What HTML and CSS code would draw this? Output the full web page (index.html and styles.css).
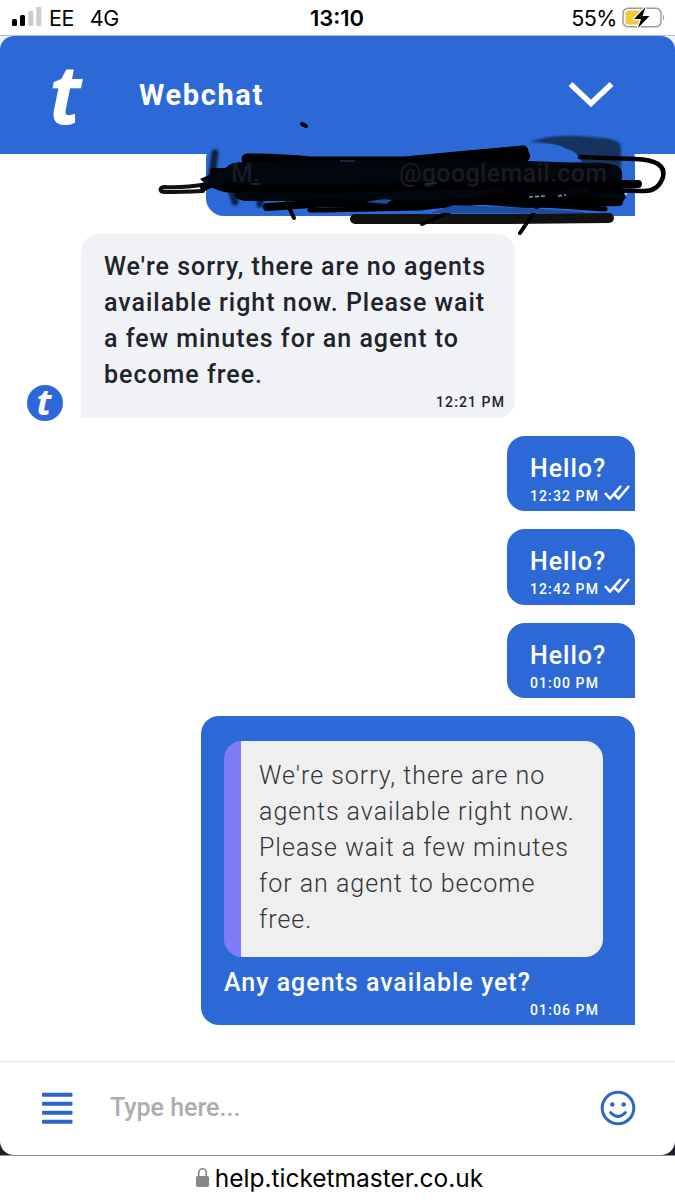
FILE: index.html
```html
<!DOCTYPE html>
<html lang="en">

<head>
    <meta charset="UTF-8">
    <meta name="viewport" content="width=device-width, initial-scale=1.0">
    <title>Webchat</title>
    <link rel="stylesheet" href="styles.css">
</head>

<body>

    <div class="phone">
        <!-- Status bar -->
        <div class="status-bar">
            <div class="status-left">
                <svg class="signal" width="30" height="20" viewBox="0 0 30 20">
                    <rect x="0" y="12" width="5" height="7" rx="1.5" fill="#000"/>
                    <rect x="8" y="8" width="5" height="11" rx="1.5" fill="#000"/>
                    <rect x="16.3" y="4" width="5" height="15" rx="1" fill="#ccc"/>
                    <rect x="24.3" y="0" width="5" height="19" rx="1" fill="#ccc"/>
                </svg>
                <span class="carrier">EE</span>
                <span class="network">4G</span>
            </div>
            <div class="clock">13:10</div>
            <div class="status-right">
                <span class="percent">55%</span>
                <svg class="battery" width="44" height="22" viewBox="0 0 44 22">
                    <rect x="1" y="1.2" width="38" height="18.6" rx="5" fill="#fff" stroke="#9b9b9b" stroke-width="1.5"/>
                    <path d="M6 3.5h13.5v14H6A2.5 2.5 0 0 1 3.5 15V6A2.5 2.5 0 0 1 6 3.5z" fill="#f5c73c"/>
                    <path d="M41 7.5q2.5 3 0 6z" fill="#9b9b9b"/>
                    <path d="M23.5 0 12 12h7l-3 9 11.5-12h-7z" fill="#000" stroke="#fff" stroke-width="2.4" paint-order="stroke"/>
                </svg>
            </div>
        </div>

        <!-- Header -->
        <div class="header-wrap">
            <div class="header">
                <span class="logo">t</span>
                <h1>Webchat</h1>
                <svg class="chevron" width="46" height="28" viewBox="0 0 46 28">
                    <path d="M2.5 3 23 22.5 43.5 3" fill="none" stroke="#fff" stroke-width="5.6"/>
                </svg>
            </div>
        </div>

        <!-- Messages -->
        <div class="chat">
            <div class="message sent email">
                <div class="meta">
                    <svg class="ticks" width="27" height="15" viewBox="0 0 27 15"><path d="M1 8l5 5.5L17 1M9.5 8.5l5 5L25 1" fill="none" stroke="#a9c6f4" stroke-width="2.6"/></svg>
                </div>
            </div>

            <div class="row">
                <span class="avatar">t</span>
                <div class="message received">
                    <p class="text">We're sorry, there are no agents<br>available right now. Please wait<br>a few minutes for an agent to<br>become free.</p>
                    <div class="meta"><span class="time">12:21 PM</span></div>
                </div>
            </div>

            <div class="message sent">
                <p class="text">Hello?</p>
                <div class="meta">
                    <span class="time">12:32 PM</span>
                    <svg class="ticks" width="27" height="15" viewBox="0 0 27 15"><path d="M1 8l5 5.5L17 1M9.5 8.5l5 5L25 1" fill="none" stroke="#fff" stroke-width="2.6"/></svg>
                </div>
            </div>

            <div class="message sent">
                <p class="text">Hello?</p>
                <div class="meta">
                    <span class="time">12:42 PM</span>
                    <svg class="ticks" width="27" height="15" viewBox="0 0 27 15"><path d="M1 8l5 5.5L17 1M9.5 8.5l5 5L25 1" fill="none" stroke="#fff" stroke-width="2.6"/></svg>
                </div>
            </div>

            <div class="message sent">
                <p class="text">Hello?</p>
                <div class="meta"><span class="time">01:00 PM</span></div>
            </div>

            <div class="message sent reply">
                <div class="quote">We're sorry, there are no<br>agents available right now.<br>Please wait a few minutes<br>for an agent to become<br>free.</div>
                <p class="text">Any agents available yet?</p>
                <div class="meta"><span class="time">01:06 PM</span></div>
            </div>
        </div>

        <!-- Input -->
        <div class="input-wrap">
            <div class="input-bar">
                <svg class="menu" width="31" height="32" viewBox="0 0 31 32" fill="#2d66c8">
                    <rect y="0.7" width="30.5" height="4" rx="1"/>
                    <rect y="9.7" width="30.5" height="4" rx="1"/>
                    <rect y="18.7" width="30.5" height="4" rx="1"/>
                    <rect y="27.7" width="30.5" height="4" rx="1"/>
                </svg>
                <span class="placeholder">Type here...</span>
                <svg class="smiley" width="36" height="36" viewBox="0 0 36 36">
                    <circle cx="18" cy="18" r="15.8" fill="none" stroke="#2d66c8" stroke-width="3"/>
                    <circle cx="12.3" cy="14.5" r="2.3" fill="#2d66c8"/>
                    <circle cx="23.7" cy="14.5" r="2.3" fill="#2d66c8"/>
                    <path d="M10.5 22.5q7.5 8 15 0" fill="none" stroke="#2d66c8" stroke-width="2.8" stroke-linecap="round"/>
                </svg>
            </div>
        </div>

        <!-- Address bar -->
        <div class="address-bar">
            <svg class="lock" width="13" height="20" viewBox="0 0 13 20">
                <rect x="0" y="8" width="13" height="11" rx="1.8" fill="#85858a"/>
                <path d="M2.7 8.5V5a3.8 4.2 0 0 1 7.6 0v3.5" fill="none" stroke="#85858a" stroke-width="1.6"/>
            </svg>
            <span>help.ticketmaster.co.uk</span>
        </div>

        <!-- Marker scribble over the email -->
        <svg class="scribble" width="520" height="120" viewBox="155 120 520 120">
            <defs>
                <filter id="soft"><feGaussianBlur stdDeviation="1.2"/></filter>
            </defs>
            <g filter="url(#soft)">
                <path d="M530 142q24-9 60-5 31 1 31 10v34h-40l-10-25q-14-14-41-14z" fill="#12305f"/>
                <path d="M215 153l-3 22M232 192l3 10M262 196l-2 8" fill="none" stroke="#0a2145" stroke-width="7" stroke-linecap="round"/>
            </g>
            <path d="M526 144q30-2 41 5 10 2 15 13-25 1-45-2-8-3-11-16z" fill="#2c69d7"/>
            <g fill="none" stroke="#000" stroke-linecap="round" stroke-linejoin="round">
                <path d="M302 124l4 2" stroke-width="4"/>
                <path d="M203 191q-22 1-38 1c-7 0-5-5 0-5q18 1 42-3" stroke="#111" stroke-width="4"/>
                <path d="M204 187q8-6 32-3M214 172h22" stroke-width="8"/>
                <path d="M247 159q34 0 64 3h94l62-6 56-5" stroke-width="11"/>
                <path d="M400 164l124-8" stroke-width="12"/>
            </g>
            <path d="M227 167q3-5 20-5l60-2 220 1 60 2q35-2 35 10 0 9-2 12l6 12-6 9-95 2-66-5-74 3-60-5-80 0q-12-2-10-8-20 0-35-14z" fill="#02060d"/>
            <g fill="none" stroke="#000" stroke-linecap="round" stroke-linejoin="round">
                <path d="M226 187q80 4 194-1l218-2" stroke-width="8"/>
                <path d="M267 207l60-4 100 2 90-7 102 4" stroke-width="8"/>
                <path d="M310 210h15l95-2 60-7 125 8" stroke-width="5"/>
                <path d="M355 219h150l104-1" stroke="#111110" stroke-width="10"/>
                <path d="M287 203l7 15M422 224l68-30 80-6M537 208l-17 25" stroke-width="4"/>
                <path d="M580 157l55 2q32 1 28 18-5 15-21 14l-50-1" stroke-width="4.5"/>
            </g>
            <path d="M366 202q18-4 26-2l-6 4zM430 213l24-8 90 4 40 3v1H430z" fill="#1c4b9f"/>
            <g class="scribble-text">
                <text x="231" y="182">M.</text>
                <text x="399" y="182" textLength="208">@googlemail.com</text>
            </g>
            <path d="M251 184h9M340 161h15M425 184l12-1" stroke="#1c3150" stroke-width="1.5"/>
            <path d="M529 197l17-1M558 196l8-1" stroke="#8293b3" stroke-width="1.6" stroke-dasharray="4 2"/>
        </svg>
    </div>

</body>

</html>
```

FILE: styles.css
```css
* {
    box-sizing: border-box;
}

body {
    margin: 0;
    background-color: #fff;
    font-family: Roboto, "Liberation Sans", sans-serif;
}

.phone {
    position: relative;
    display: flex;
    flex-direction: column;
    width: 675px;
    height: 1200px;
    overflow: hidden;
}

/* Status bar */
.status-bar {
    display: grid;
    grid-template-columns: 1fr auto 1fr;
    align-items: center;
    height: 36px;
    padding: 1px 10px 0 12px;
    border-bottom: 1px solid #b9bdcb;
    font-family: Inter, sans-serif;
    font-size: 21.5px;
    letter-spacing: -0.5px;
    color: #000;
}

.status-left,
.status-right {
    display: flex;
    align-items: center;
}

.status-right {
    justify-content: flex-end;
}

.signal {
    margin-right: 7px;
    margin-top: -2px;
}

.network {
    margin-left: 16px;
}

.clock {
    margin-left: -3px;
    font-size: 22px;
    font-weight: 600;
    letter-spacing: 0;
}

.battery {
    margin-left: 5px;
    margin-right: -1px;
}

/* Header */
.header-wrap {
    background-color: #eef3fb;
}

.header {
    display: flex;
    align-items: center;
    height: 118px;
    padding: 0 61px 0 49px;
    background-color: #2c69d7;
    border-radius: 14px 14px 0 0;
    color: #fff;
}

.logo {
    width: 90px;
    font: italic 700 83px/112px "Open Sans", sans-serif;
    margin-top: -6px;
    transform: scaleX(0.95);
    transform-origin: left;
}

h1 {
    flex: 1;
    margin: 0;
    font-size: 29px;
    font-weight: 700;
    letter-spacing: 1.6px;
}

/* Messages */
.chat {
    display: flex;
    flex-direction: column;
    justify-content: flex-end;
    align-items: flex-end;
    gap: 18px;
    height: 906px;
    padding: 0 40px 35px 27px;
    overflow: hidden;
}

.row {
    display: flex;
    align-items: flex-end;
    align-self: flex-start;
    gap: 18px;
}

.avatar {
    width: 36px;
    height: 36px;
    margin-bottom: -3.5px;
    border-radius: 50%;
    background-color: #2c69d7;
    color: #fff;
    text-align: center;
    text-indent: -2px;
    font: italic 700 36px/34px "Open Sans", sans-serif;
}

.message {
    flex-shrink: 0;
    padding: 15px 23px 6.5px;
    border-radius: 18px;
    font-size: 25px;
    font-weight: 500;
    line-height: 36px;
    letter-spacing: 0.98px;
}

.text {
    margin: 0;
    white-space: nowrap;
}

.sent {
    width: 128px;
    background-color: #2c69d7;
    border-bottom-right-radius: 0;
    color: #fff;
}

.received {
    width: 434px;
    background-color: #f1f2f6;
    border-bottom-left-radius: 0;
    color: #20232a;
}

.meta {
    display: flex;
    height: 18px;
    font-size: 14px;
    line-height: 18px;
    letter-spacing: 1.1px;
    white-space: nowrap;
}

.received .meta {
    justify-content: flex-end;
    margin-right: -13px;
}

.ticks {
    flex-shrink: 0;
    margin-left: 5px;
    margin-top: -2px;
}

.email {
    width: 429px;
    padding-top: 51px;
}

.email .meta {
    justify-content: flex-end;
    margin-right: -18px;
}

.reply {
    width: 434px;
    padding: 25px 23px 6px;
}

.reply .meta {
    justify-content: flex-end;
    margin-right: 13px;
}

.quote {
    width: 379px;
    height: 216px;
    margin-bottom: 8px;
    padding: 17px 0 0 35px;
    border-radius: 18px;
    background: linear-gradient(to right, #7d7cf6 17px, #efefef 17px);
    color: #33343a;
    font-weight: 300;
}

/* Input */
.input-wrap {
    background-color: #1d202b;
    border-bottom: 1px solid #8b8d94;
}

.input-bar {
    display: flex;
    align-items: center;
    height: 95px;
    padding: 0 39px 3px 42px;
    border-top: 3px solid #f3f3f3;
    border-radius: 0 0 14px 14px;
    background-color: #fff;
}

.placeholder {
    flex: 1;
    margin-left: 37px;
    font-size: 25px;
    font-weight: 500;
    color: #adadad;
}

/* Address bar */
.address-bar {
    display: flex;
    flex: 1;
    align-items: center;
    justify-content: center;
    gap: 6px;
    padding: 0 0 1px 4px;
    font-family: Inter, sans-serif;
    font-size: 24.5px;
    color: #000;
}

/* Scribble */
.scribble {
    position: absolute;
    left: 155px;
    top: 120px;
}

.scribble-text {
    fill: #191b20;
    font-size: 25px;
    font-weight: 500;
}
```
